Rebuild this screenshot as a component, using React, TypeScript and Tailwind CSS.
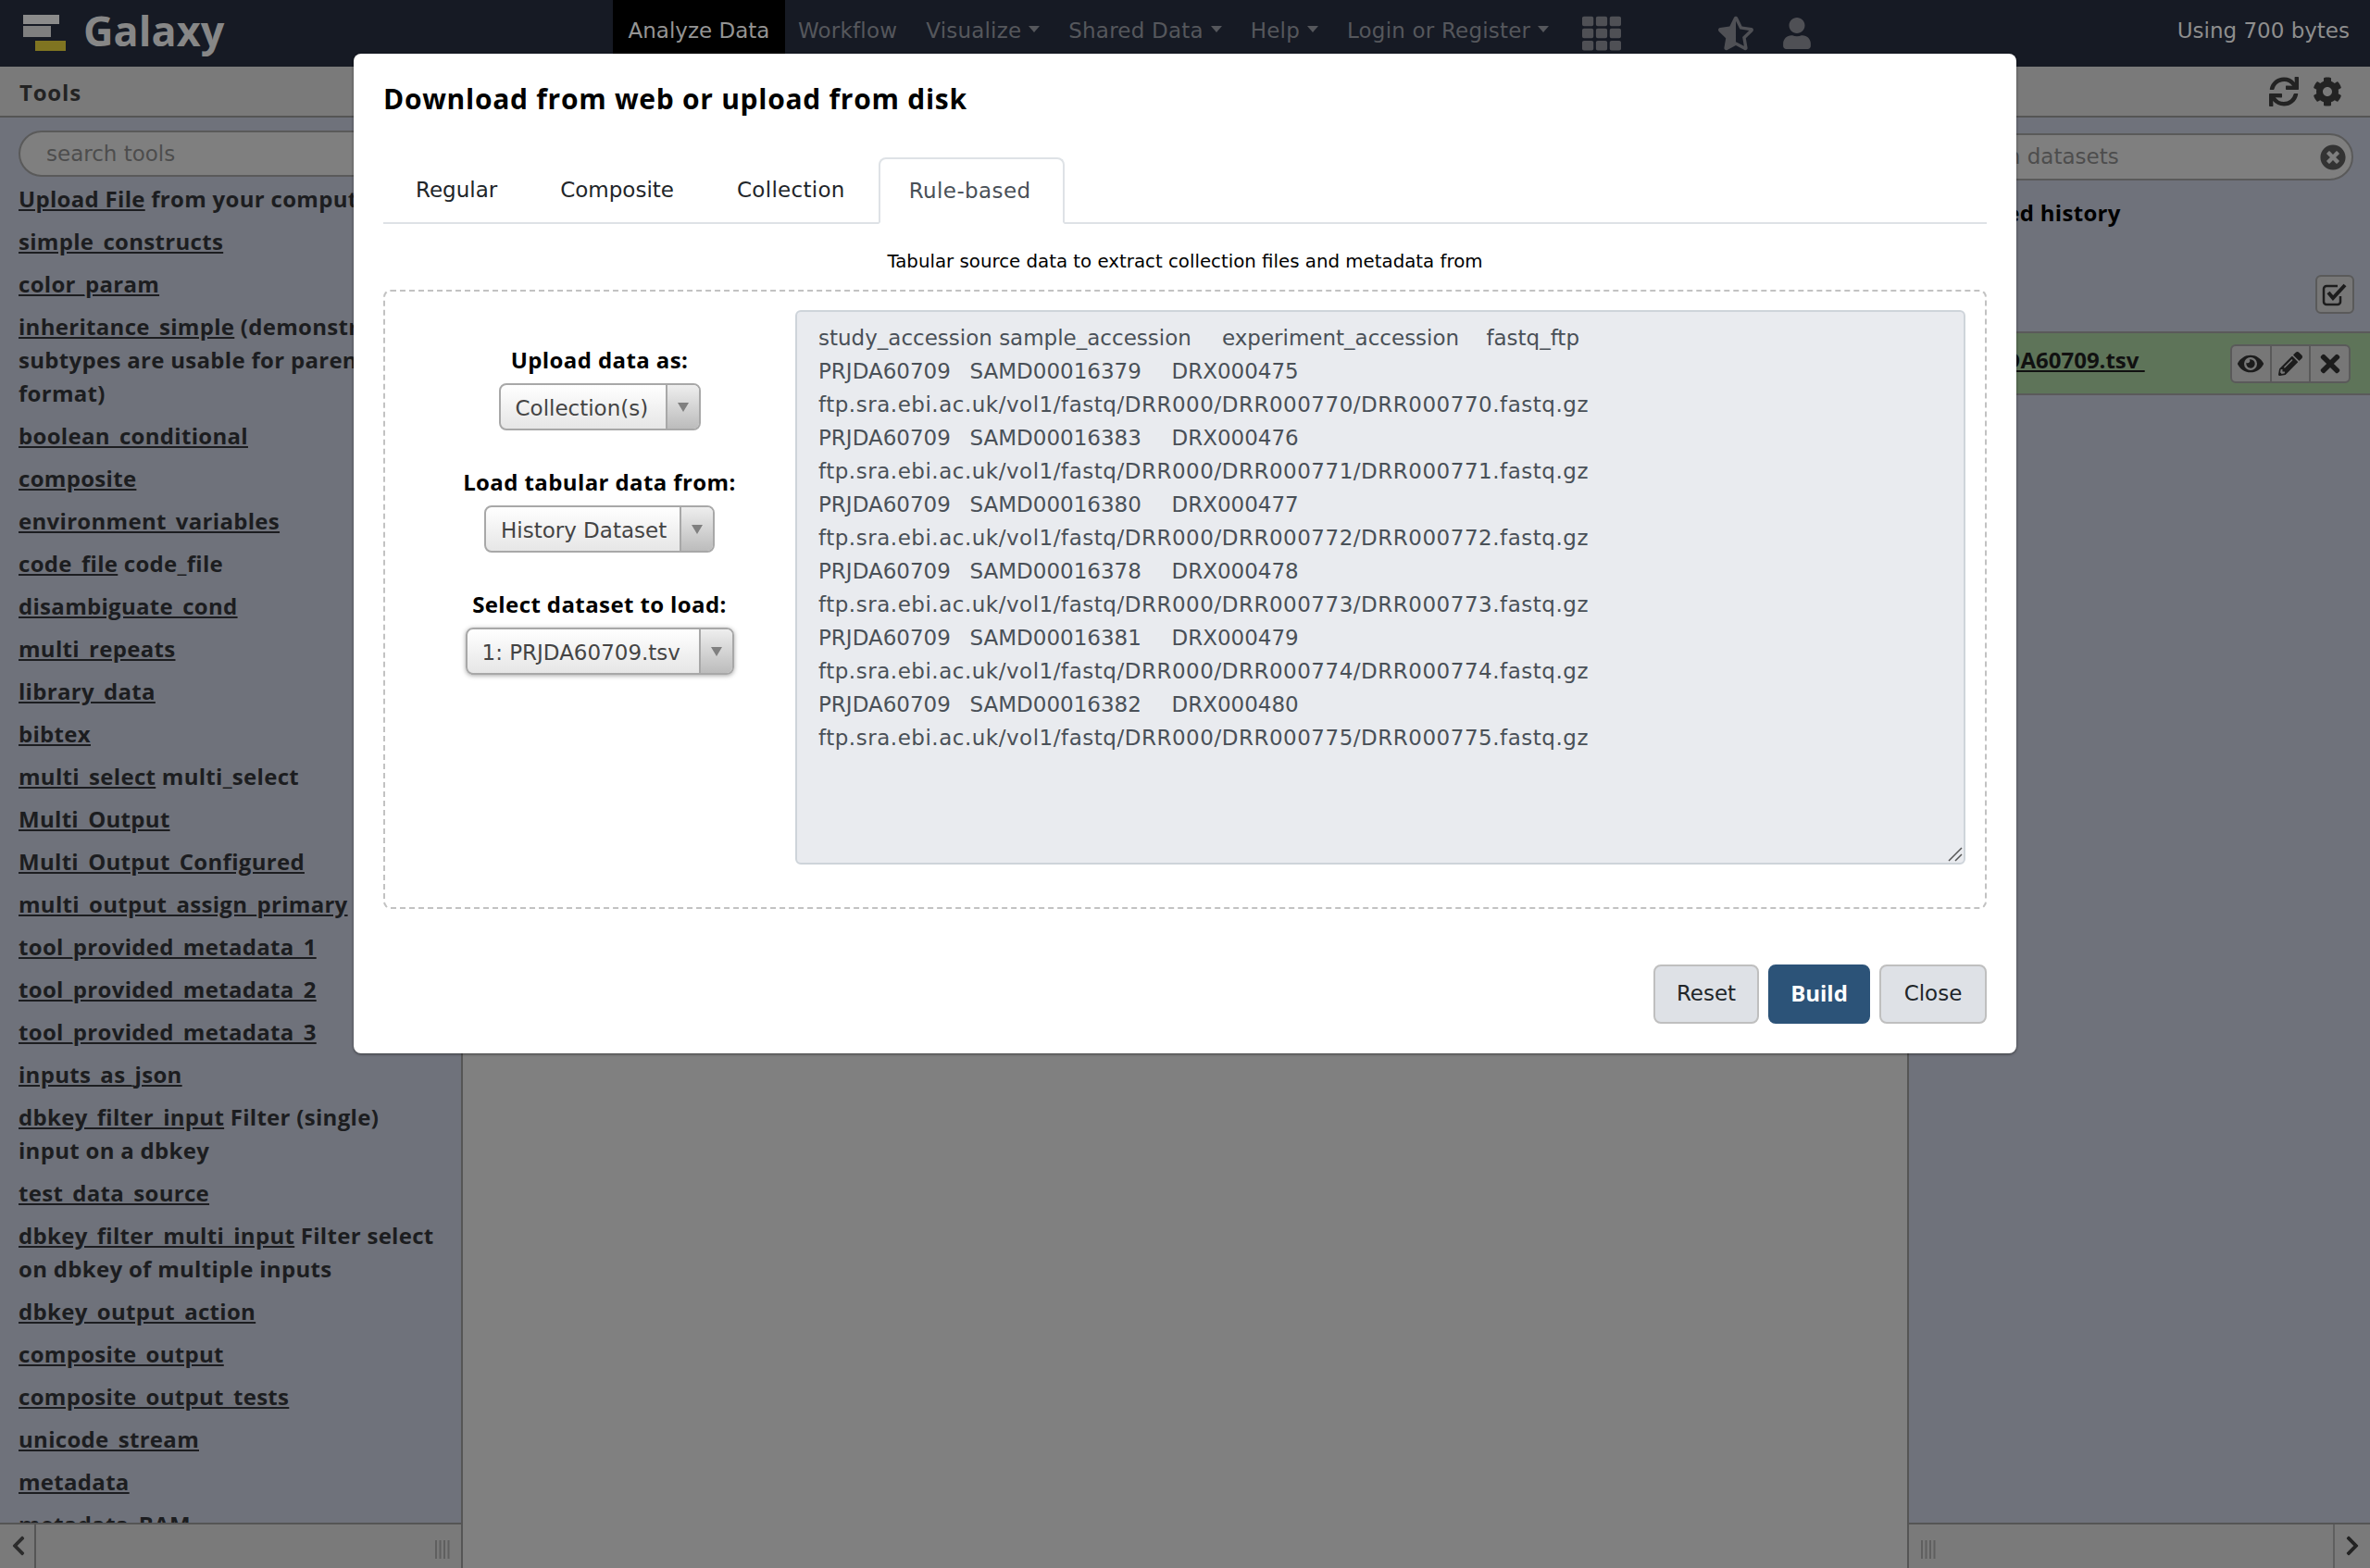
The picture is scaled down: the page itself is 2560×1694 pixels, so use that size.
import React from "react";
import { FaStarHalfAlt, FaUser, FaTh, FaSync, FaCog, FaEye, FaPencilAlt, FaTimes, FaTimesCircle, FaChevronLeft, FaChevronRight } from "react-icons/fa";

const tools: [string, string?][] = [
  ["Upload File", "from your computer"],
  ["simple_constructs"],
  ["color_param"],
  ["inheritance_simple", "(demonstrate\nsubtypes are usable for parent\nformat)"],
  ["boolean_conditional"],
  ["composite"],
  ["environment_variables"],
  ["code_file", "code_file"],
  ["disambiguate_cond"],
  ["multi_repeats"],
  ["library_data"],
  ["bibtex"],
  ["multi_select", "multi_select"],
  ["Multi_Output"],
  ["Multi_Output_Configured"],
  ["multi_output_assign_primary"],
  ["tool_provided_metadata_1"],
  ["tool_provided_metadata_2"],
  ["tool_provided_metadata_3"],
  ["inputs_as_json"],
  ["dbkey_filter_input", "Filter (single)\ninput on a dbkey"],
  ["test_data_source"],
  ["dbkey_filter_multi_input", "Filter select\non dbkey of multiple inputs"],
  ["dbkey_output_action"],
  ["composite_output"],
  ["composite_output_tests"],
  ["unicode_stream"],
  ["metadata"],
  ["metadata_BAM"],
];

const rows = [
  ["SAMD00016379", "DRX000475", "770"],
  ["SAMD00016383", "DRX000476", "771"],
  ["SAMD00016380", "DRX000477", "772"],
  ["SAMD00016378", "DRX000478", "773"],
  ["SAMD00016381", "DRX000479", "774"],
  ["SAMD00016382", "DRX000480", "775"],
];

function NavItem({ label, caret }: { label: string; caret?: boolean }) {
  return (
    <div className="flex items-center gap-[8px] tracking-[0.2px] text-[#55575c]">
      <span>{label}</span>
      {caret && <span className="mt-[-4px] h-0 w-0 border-x-[6px] border-t-[7px] border-x-transparent border-t-[#55575c]" />}
    </div>
  );
}

function Handle() {
  return (
    <svg width="16" height="20" viewBox="0 0 16 20" className="text-[#5f5f5f]">
      <path d="M1 0v20M5.500 0v20M10 0v20M14.500 0v20" stroke="currentColor" strokeWidth="2" />
    </svg>
  );
}

function Select({ label, value, w }: { label: string; value: string; w: string }) {
  const focused = value.startsWith("1:");
  return (
    <div className="flex flex-col items-center">
      <div className="h-[36px] font-['Open_Sans',sans-serif] text-[24px] font-bold leading-[36px] tracking-[0.4px] text-black">{label}</div>
      <div className={`mt-[7px] flex h-[51px] ${w} overflow-hidden rounded-[8px] border-2 border-[#a8a8a8] bg-gradient-to-b from-white to-[#e6e6e6] ${focused ? "shadow-[0_1px_5px_rgba(0,0,0,0.35)]" : ""}`}>
        <div className="flex-1 pl-[16px] text-[23px] leading-[50px] text-[#444]">{value}</div>
        <div className="flex w-[36px] items-center justify-center border-l-2 border-[#a8a8a8] bg-gradient-to-b from-[#eeeeee] to-[#bcbcbc]">
          <span className="h-0 w-0 border-x-[6px] border-t-[10px] border-x-transparent border-t-[#808080]" />
        </div>
      </div>
    </div>
  );
}

function FooterBtn({ label, w, primary }: { label: string; w: string; primary?: boolean }) {
  return (
    <div className={`h-[64px] ${w} rounded-[8px] border-2 text-center text-[23px] leading-[58px] ${primary ? "border-[#2c5378] bg-[#2c5378] font-['Open_Sans',sans-serif] text-[24px] font-bold text-white" : "border-[#bfbfbf] bg-[#dee1e6] text-[#212529]"}`}>
      {label}
    </div>
  );
}

export default function App() {
  return (
    <div className="relative flex h-[1694px] w-[2560px] flex-col overflow-hidden bg-[#808080] font-['DejaVu_Sans',sans-serif]">
      <header className="flex h-[72px] shrink-0 items-center bg-[#161a24] text-[23px]">
        <div className="flex w-[662px] shrink-0 items-center">
          <svg width="50" height="44" viewBox="0 0 50 44" className="ml-[24px] shrink-0">
            <rect x="1" y="2" width="39" height="10" fill="#8b8b8b" />
            <rect x="1" y="14" width="30" height="12" fill="#7f7f7f" />
            <rect x="14" y="30" width="33" height="11" fill="#7f7421" />
          </svg>
          <span className="ml-[16px] mt-[-8px] font-['Open_Sans',sans-serif] text-[45px] font-bold leading-none text-[#878787]">Galaxy</span>
        </div>
        <div className="flex h-full w-[186px] items-center justify-center bg-black pb-[5px] text-[#949494]">Analyze Data</div>
        <div className="ml-[14px] mt-[-5px] flex gap-[31px]">
          <NavItem label="Workflow" />
          <NavItem label="Visualize" caret />
          <NavItem label="Shared Data" caret />
          <NavItem label="Help" caret />
          <NavItem label="Login or Register" caret />
        </div>
        <FaTh className="ml-[36px] text-[#4f5055]" size={42} />
        <FaStarHalfAlt className="ml-[105px] text-[#4f5055]" size={38} />
        <FaUser className="ml-[30px] text-[#4f5055]" size={34} />
        <span className="ml-auto mr-[22px] mt-[-5px] text-[#8e8e8e]">Using 700 bytes</span>
      </header>

      <main className="flex min-h-0 flex-1">
        <aside className="flex w-[500px] shrink-0 flex-col border-r-2 border-[#555] bg-[#6f727b]">
          <div className="flex h-[55px] shrink-0 items-center border-b-2 border-[#555] bg-[#7a7a7a] pl-[21px] pt-[2px] font-['Open_Sans',sans-serif] text-[24px] font-bold tracking-[0.8px] text-[#232323]">Tools</div>
          <div className="min-h-0 flex-1 overflow-hidden px-[20px]">
            <div className="mt-[14px] h-[50px] w-[600px] rounded-[25px] border-2 border-[#5a5a5a] bg-[#7f7f7f] pl-[28px] text-[23px] leading-[46px] text-[#4d4d4d]">search tools</div>
            <div className="mt-[6px] flex flex-col gap-[10px] font-['Open_Sans',sans-serif] text-[24px] font-bold leading-[36px] tracking-[0.3px] text-[#1c1d20]">
              {tools.map(([name, desc]) => (
                <div key={name} className="whitespace-pre">
                  <span className="underline">{name}</span>
                  {desc ? ` ${desc}` : ""}
                </div>
              ))}
            </div>
          </div>
          <div className="flex h-[49px] shrink-0 items-center border-t-2 border-[#555] bg-[#7a7a7a]">
            <div className="flex h-full w-[39px] items-center justify-center border-r-2 border-[#555] pb-[2px] pl-[2px] text-[#2c2c2c]">
              <FaChevronLeft size={24} />
            </div>
            <div className="ml-auto mr-[12px] mt-[6px]"><Handle /></div>
          </div>
        </aside>

        <section className="min-w-0 flex-1 bg-[#808080]" />

        <aside className="flex w-[500px] shrink-0 flex-col border-l-2 border-[#555] bg-[#6f727b]">
          <div className="flex h-[55px] shrink-0 items-center justify-end gap-[15px] border-b-2 border-[#555] bg-[#7a7a7a] pr-[30px] text-[#232323]">
            <FaSync size={32} />
            <FaCog size={32} />
          </div>
          <div className="min-h-0 flex-1 overflow-hidden">
            <div className="ml-[12px] mt-[17px] flex h-[51px] w-[468px] items-center justify-between rounded-[26px] border-2 border-[#5a5a5a] bg-[#7f7f7f] pl-[30px] pr-[6px] text-[23px] text-[#4d4d4d]">
              <span>search datasets</span>
              <FaTimesCircle size={28} className="text-[#333]" />
            </div>
            <div className="ml-[16px] mt-[17px] font-['Open_Sans',sans-serif] text-[24px] font-bold leading-[36px] tracking-[0.3px] text-black">Unnamed history</div>
            <div className="flex justify-end pr-[17px] pt-[49px]">
              <div className="flex h-[42px] w-[42px] items-center justify-center rounded-[6px] border-2 border-[#5a5a5a] bg-[#777]">
                <svg width="28" height="26" viewBox="0 0 28 26" fill="none" stroke="#1c1c1c">
                  <path d="M20 15v6a3 3 0 0 1-3 3H5a3 3 0 0 1-3-3V7a3 3 0 0 1 3-3h12" strokeWidth="2.500" />
                  <path d="m7 11 5 6L25 3" strokeWidth="4" />
                </svg>
              </div>
            </div>
            <div className="mt-[19px] flex h-[69px] items-center justify-between border-y-2 border-[#5a5a5a] bg-[#5e7459] pl-[20px] pr-[21px]">
              <span className="ml-[17px] mt-[-8px] font-['Open_Sans',sans-serif] text-[24px] font-bold text-[#111] underline">1: PRJDA60709.tsv&nbsp;</span>
              <div className="flex h-[42px] w-[130px] overflow-hidden rounded-[6px] border-2 border-[#5a5a5a] bg-[#777] text-[#1c1c1c]">
                <div className="flex flex-1 items-center justify-center border-r-2 border-[#5a5a5a]"><FaEye size={28} /></div>
                <div className="flex flex-1 items-center justify-center border-r-2 border-[#5a5a5a]"><FaPencilAlt size={26} /></div>
                <div className="flex flex-1 items-center justify-center"><FaTimes size={30} /></div>
              </div>
            </div>
          </div>
          <div className="flex h-[49px] shrink-0 items-center border-t-2 border-[#555] bg-[#7a7a7a]">
            <div className="ml-[13px] mt-[6px]"><Handle /></div>
            <div className="ml-auto flex h-full w-[40px] items-center justify-center border-l-2 border-[#5f5f5f] pb-[2px] text-[#222]">
              <FaChevronRight size={24} />
            </div>
          </div>
        </aside>
      </main>

      <div className="absolute left-[382px] top-[58px] flex h-[1080px] w-[1796px] flex-col rounded-[8px] bg-white px-[32px] pt-[32px] shadow-[0_1px_3px_rgba(0,0,0,0.5)]">
        <h2 className="font-['Open_Sans',sans-serif] text-[30px] font-bold leading-[34px] tracking-[0.72px] text-black">Download from web or upload from disk</h2>
        <div className="mt-[46px] flex h-[72px] items-end border-b-2 border-[#dee2e6] pl-[2px] text-[23px]">
          <div className="mr-[2px] h-[70px] px-[33px] leading-[70px] text-[#212529]">Regular</div>
          <div className="mr-[2px] h-[70px] px-[33px] leading-[70px] text-[#212529]">Composite</div>
          <div className="mr-[2px] h-[70px] px-[33px] leading-[70px] tracking-[0.3px] text-[#212529]">Collection</div>
          <div className="mb-[-2px] ml-[1px] h-[72px] rounded-t-[8px] border-2 border-[#dee2e6] border-b-white pl-[31px] pr-[34px] leading-[68px] tracking-[0.4px] text-[#495057]">Rule-based</div>
        </div>
        <p className="mt-[29px] text-center text-[19.8px] leading-[24px] text-black">Tabular source data to extract collection files and metadata from</p>
        <div className="mt-[18px] flex h-[669px] rounded-[8px] border-2 border-dashed border-[#c2c2c2] pl-[20px] pr-[21px] pt-[20px]">
          <div className="flex w-[423px] shrink-0 flex-col items-center gap-[38px] pt-[36px]">
            <Select label="Upload data as:" value="Collection(s)" w="w-[218px]" />
            <Select label="Load tabular data from:" value="History Dataset" w="w-[249px]" />
            <Select label="Select dataset to load:" value="1: PRJDA60709.tsv" w="w-[290px]" />
          </div>
          <div className="relative h-[599px] flex-1 overflow-hidden whitespace-pre rounded-[6px] border-2 border-[#ced4da] bg-[#e9ebef] pl-[23px] pt-[10px] text-[23px] leading-[36px] text-[#495057] [tab-size:54.5px]">
            <div>{"study_accession sample_accession\texperiment_accession    fastq_ftp"}</div>
            {rows.map(([sample, experiment, run]) => (
              <React.Fragment key={run}>
                <div>{`PRJDA60709\t${sample}\t${experiment}`}</div>
                <div className="tracking-[0.52px]">{`ftp.sra.ebi.ac.uk/vol1/fastq/DRR000/DRR000${run}/DRR000${run}.fastq.gz`}</div>
              </React.Fragment>
            ))}
            <svg width="16" height="16" viewBox="0 0 16 16" className="absolute bottom-[1px] right-[1px]">
              <path d="M1 15 15 1M8 15l7-7" stroke="#555" strokeWidth="1.500" fill="none" />
            </svg>
          </div>
        </div>
        <div className="mt-[60px] flex justify-end gap-[10px]">
          <FooterBtn label="Reset" w="w-[114px]" />
          <FooterBtn label="Build" w="w-[110px]" primary />
          <FooterBtn label="Close" w="w-[116px]" />
        </div>
      </div>
    </div>
  );
}
